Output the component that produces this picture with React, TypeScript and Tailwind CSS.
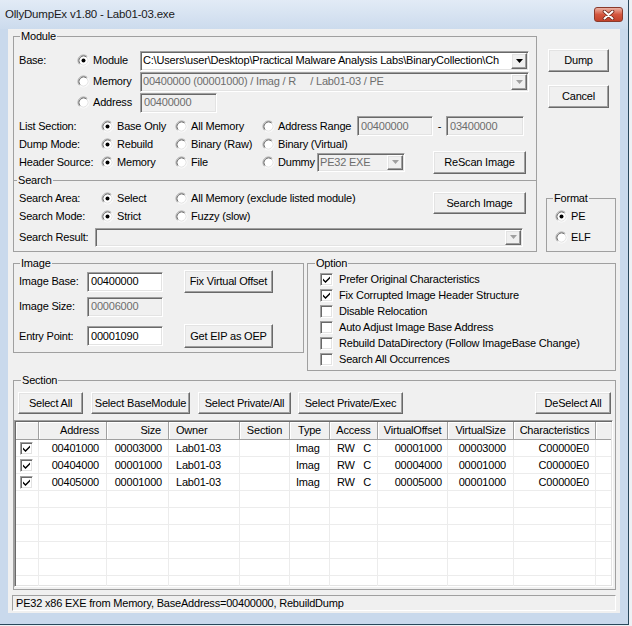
import type { ReactNode } from 'react';

const sunken =
  'border border-t-[#a0a0a0] border-l-[#a0a0a0] border-r-white border-b-white shadow-[inset_1px_1px_0_#696969,inset_-1px_-1px_0_#e3e3e3]';
const raised =
  'border border-t-white border-l-white border-r-[#696969] border-b-[#696969] shadow-[inset_-1px_-1px_0_#a0a0a0,inset_1px_1px_0_#e3e3e3] bg-[#f0f0f0]';

function Radio({ on }: { on?: boolean }) {
  return (
    <svg width="13" height="13" viewBox="0 0 13 13" className="shrink-0">
      <circle cx="6.5" cy="6.5" r="5" fill="#fff" />
      <path d="M2.61 10.39A5.5 5.5 0 0 1 10.39 2.61" fill="none" stroke="#a0a0a0" />
      <path d="M10.39 2.61A5.5 5.5 0 0 1 2.61 10.39" fill="none" stroke="#fff" />
      <path d="M3.32 9.68A4.5 4.5 0 0 1 9.68 3.32" fill="none" stroke="#696969" />
      <path d="M9.68 3.32A4.5 4.5 0 0 1 3.32 9.68" fill="none" stroke="#e3e3e3" />
      {on && <circle cx="6.5" cy="6.5" r="2" fill="#000" />}
    </svg>
  );
}

function RadioLabel({ on, className, children }: { on?: boolean; className: string; children: ReactNode }) {
  return (
    <div className={`flex items-center gap-[3px] shrink-0 ${className}`}>
      <Radio on={on} />
      <span className="whitespace-nowrap">{children}</span>
    </div>
  );
}

function Check({ on }: { on?: boolean }) {
  return (
    <span className={`w-[13px] h-[13px] shrink-0 bg-white flex items-center justify-center ${sunken}`}>
      {on && (
        <svg width="7" height="7" viewBox="0 0 7 7">
          <path d="M0 2.5L2.5 5L7 0.5V2.5L2.5 7L0 4.5Z" fill="#000" />
        </svg>
      )}
    </span>
  );
}

function Combo({ className, text = '', disabled }: { className: string; text?: string; disabled?: boolean }) {
  return (
    <div className={`flex shrink-0 ${sunken} ${disabled ? 'bg-[#f0f0f0] text-[#6d6d6d]' : 'bg-white'} ${className}`}>
      <div className="flex-1 min-w-0 overflow-hidden whitespace-pre pl-[2px] flex items-center">{text}</div>
      <div className={`w-[16px] m-[1px] flex items-center justify-center ${raised}`}>
        <svg width="7" height="4" viewBox="0 0 7 4">
          <path d="M0 0H7L3.5 4Z" fill={disabled ? '#a0a0a0' : '#000'} />
        </svg>
      </div>
    </div>
  );
}

function Edit({ className, text, disabled }: { className: string; text: string; disabled?: boolean }) {
  return (
    <div
      className={`shrink-0 flex items-center pl-[3px] ${sunken} ${disabled ? 'bg-[#f0f0f0] text-[#6d6d6d]' : 'bg-white'} ${className}`}
    >
      {text}
    </div>
  );
}

function Btn({ className, children }: { className: string; children: ReactNode }) {
  return (
    <div className={`shrink-0 flex items-center justify-center whitespace-nowrap ${raised} ${className}`}>{children}</div>
  );
}

const columns = [
  { w: 'w-[23px]', label: '', head: '', cell: '' },
  { w: 'w-[68px]', label: 'Address', head: 'justify-end pr-[7px]', cell: 'justify-end pr-[7px]' },
  { w: 'w-[62px]', label: 'Size', head: 'justify-end pr-[7px]', cell: 'justify-end pr-[6px]' },
  { w: 'w-[71px]', label: 'Owner', head: 'pl-[7px]', cell: 'pl-[7px]' },
  { w: 'w-[50px]', label: 'Section', head: 'justify-center', cell: '' },
  { w: 'w-[40px]', label: 'Type', head: 'justify-center', cell: 'pl-[6px]' },
  { w: 'w-[48px]', label: 'Access', head: 'justify-center', cell: 'pl-[7px]' },
  { w: 'w-[70px]', label: 'VirtualOffset', head: 'justify-center', cell: 'justify-end pr-[5px]' },
  { w: 'w-[66px]', label: 'VirtualSize', head: 'justify-center', cell: 'justify-end pr-[7px]' },
  { w: 'w-[82px]', label: 'Characteristics', head: 'justify-center', cell: 'justify-end pr-[6px]' },
];

const sections = [
  ['00401000', '00003000', 'Lab01-03', '', 'Imag', 'RW\u00a0\u00a0\u00a0C', '00001000', '00003000', 'C00000E0'],
  ['00404000', '00001000', 'Lab01-03', '', 'Imag', 'RW\u00a0\u00a0\u00a0C', '00004000', '00001000', 'C00000E0'],
  ['00405000', '00001000', 'Lab01-03', '', 'Imag', 'RW\u00a0\u00a0\u00a0C', '00005000', '00001000', 'C00000E0'],
];

const options = [
  { label: 'Prefer Original Characteristics', on: true },
  { label: 'Fix Corrupted Image Header Structure', on: true },
  { label: 'Disable Relocation', on: false },
  { label: 'Auto Adjust Image Base Address', on: false },
  { label: 'Rebuild DataDirectory (Follow ImageBase Change)', on: false },
  { label: 'Search All Occurrences', on: false },
];

function ListView() {
  const rows = Array.from({ length: 9 }, (_, i) => sections[i] || null);
  return (
    <div className={`w-[599px] h-[167px] bg-white overflow-hidden p-px ${sunken}`}>
      <div className="flex h-[18px] bg-[#f0f0f0] border-b border-[#a0a0a0]">
        {columns.map((c, i) => (
          <div
            key={i}
            className={`${c.w} shrink-0 flex items-center border-r border-[#a0a0a0] shadow-[inset_1px_1px_0_#fff] ${c.head}`}
          >
            {c.label}
          </div>
        ))}
        <div className="flex-1 shadow-[inset_1px_1px_0_#fff]" />
      </div>
      {rows.map((r, ri) => (
        <div key={ri} className="flex h-[17px] border-b border-[#ececec]">
          {columns.map((c, ci) => (
            <div key={ci} className={`${c.w} shrink-0 flex items-center border-r border-[#ececec] ${ci === 0 ? 'pl-[4px]' : c.cell}`}>
              {r && (ci === 0 ? <Check on /> : r[ci - 1])}
            </div>
          ))}
        </div>
      ))}
    </div>
  );
}

export default function App() {
  return (
    <div className="w-[632px] h-[626px] bg-[#eef1f5] overflow-hidden font-['Liberation_Sans',Arial,sans-serif] text-[11px] leading-[13px] tracking-[-0.2px] text-black">
      <div className="w-[629px] h-[625px] bg-[#c9d9ec] border-r border-b border-[#29485c] flex flex-col">
        <div className="h-[29px] shrink-0 flex items-center justify-between pl-[5px] pr-[5px] bg-gradient-to-b from-[#e2ebf6] to-[#ccdbed]">
          <span className="text-[11.5px] text-[#1a1a1a]">OllyDumpEx v1.80 - Lab01-03.exe</span>
          <div className="w-[29px] h-[15px] rounded-[3px] border border-[#8a3a2c] bg-gradient-to-b from-[#eab1a4] via-[#d4563f] to-[#c2412a] flex items-center justify-center">
            <svg width="13" height="10" viewBox="0 0 13 10">
              <path d="M2.5 1.5L10.5 8.5M10.5 1.5L2.5 8.5" stroke="#6b2519" strokeWidth="3.6" strokeLinecap="round" />
              <path d="M2.5 1.5L10.5 8.5M10.5 1.5L2.5 8.5" stroke="#fff" strokeWidth="2" strokeLinecap="round" />
            </svg>
          </div>
        </div>

        <div className="ml-[8px] w-[612px] h-[584px] shrink-0 bg-[#f0f0f0] pl-[5px] flex flex-col">
          <div className="flex items-start">
            <div className="w-[524px] shrink-0">
              <fieldset className="w-[524px] h-[151px] border border-b-0 border-[#a0a0a0]">
                <legend className="ml-[6px] px-[1px] leading-[14px]">Module</legend>
                <div className="pl-[5px] pt-[7px]">
                  <div className="flex items-center h-[21px]">
                    <div className="w-[58px] shrink-0">Base:</div>
                    <RadioLabel on className="w-[63px]">Module</RadioLabel>
                    <Combo
                      className="w-[389px] h-[20px]"
                      text={'C:\\Users\\user\\Desktop\\Practical Malware Analysis Labs\\BinaryCollection\\Ch'}
                    />
                  </div>
                  <div className="flex items-center h-[21px]">
                    <div className="w-[58px] shrink-0" />
                    <RadioLabel className="w-[63px]">Memory</RadioLabel>
                    <Combo disabled className="w-[389px] h-[20px]" text="00400000 (00001000) / Imag / R     / Lab01-03 / PE" />
                  </div>
                  <div className="flex items-center h-[21px]">
                    <div className="w-[58px] shrink-0" />
                    <RadioLabel className="w-[63px]">Address</RadioLabel>
                    <Edit disabled className="w-[77px] h-[20px]" text="00400000" />
                  </div>
                  <div className="flex items-center h-[20px] mt-[3px]">
                    <div className="w-[82px] shrink-0">List Section:</div>
                    <RadioLabel on className="w-[74px]">Base Only</RadioLabel>
                    <RadioLabel className="w-[87px]">All Memory</RadioLabel>
                    <RadioLabel className="w-[95px]">Address Range</RadioLabel>
                    <Edit disabled className="w-[76px] h-[20px]" text="00400000" />
                    <div className="w-[13px] shrink-0 text-center">-</div>
                    <Edit disabled className="w-[78px] h-[20px]" text="03400000" />
                  </div>
                  <div className="flex items-center h-[17px]">
                    <div className="w-[82px] shrink-0">Dump Mode:</div>
                    <RadioLabel on className="w-[74px]">Rebuild</RadioLabel>
                    <RadioLabel className="w-[87px]">Binary (Raw)</RadioLabel>
                    <RadioLabel className="w-[95px]">Binary (Virtual)</RadioLabel>
                  </div>
                  <div className="flex items-center h-[18px]">
                    <div className="w-[82px] shrink-0">Header Source:</div>
                    <RadioLabel on className="w-[74px]">Memory</RadioLabel>
                    <RadioLabel className="w-[87px]">File</RadioLabel>
                    <RadioLabel className="w-[55px]">Dummy</RadioLabel>
                    <Combo disabled className="w-[88px] h-[19px]" text="PE32 EXE" />
                    <Btn className="w-[93px] h-[23px] ml-[28px]">ReScan Image</Btn>
                  </div>
                </div>
              </fieldset>

              <fieldset className="w-[524px] h-[79px] -mt-[7px] border border-[#a0a0a0]">
                <legend className="ml-[3px] px-[1px] leading-[14px]">Search</legend>
                <div className="pl-[5px]">
                  <div className="flex items-start">
                    <div className="w-[414px] shrink-0 pt-[2px]">
                      <div className="flex items-center h-[18px]">
                        <div className="w-[82px] shrink-0">Search Area:</div>
                        <RadioLabel on className="w-[74px]">Select</RadioLabel>
                        <RadioLabel className="w-[200px]">All Memory (exclude listed module)</RadioLabel>
                      </div>
                      <div className="flex items-center h-[19px]">
                        <div className="w-[82px] shrink-0">Search Mode:</div>
                        <RadioLabel on className="w-[74px]">Strict</RadioLabel>
                        <RadioLabel className="w-[100px]">Fuzzy (slow)</RadioLabel>
                      </div>
                    </div>
                    <Btn className="w-[93px] h-[22px] mt-[5px]">Search Image</Btn>
                  </div>
                  <div className="flex items-center h-[20px] mt-[1px]">
                    <div className="w-[76px] shrink-0">Search Result:</div>
                    <Combo disabled className="w-[428px] h-[19px]" />
                  </div>
                </div>
              </fieldset>
            </div>

            <div className="w-[70px] ml-[9px] shrink-0">
              <Btn className="w-[61px] h-[23px] ml-[2px] mt-[20px]">Dump</Btn>
              <Btn className="w-[61px] h-[23px] ml-[2px] mt-[13px]">Cancel</Btn>
              <fieldset className="w-[70px] h-[61px] mt-[83px] border border-[#a0a0a0]">
                <legend className="ml-[6px] px-[1px] leading-[14px]">Format</legend>
                <div className="pl-[8px] pt-[2px]">
                  <RadioLabel on className="h-[18px]">PE</RadioLabel>
                  <RadioLabel className="h-[18px] mt-[3px]">ELF</RadioLabel>
                </div>
              </fieldset>
            </div>
          </div>

          <div className="flex items-start mt-[4px]">
            <fieldset className="w-[291px] h-[97px] shrink-0 border border-[#a0a0a0]">
              <legend className="ml-[6px] px-[1px] leading-[14px]">Image</legend>
              <div className="pl-[5px]">
                <div className="flex items-center h-[23px]">
                  <div className="w-[68px] shrink-0">Image Base:</div>
                  <Edit className="w-[76px] h-[20px]" text="00400000" />
                  <Btn className="w-[89px] h-[23px] ml-[21px]">Fix Virtual Offset</Btn>
                </div>
                <div className="flex items-center h-[21px] mt-[3px]">
                  <div className="w-[68px] shrink-0">Image Size:</div>
                  <Edit disabled className="w-[76px] h-[20px]" text="00006000" />
                </div>
                <div className="flex items-center h-[24px] mt-[7px]">
                  <div className="w-[68px] shrink-0">Entry Point:</div>
                  <Edit className="w-[76px] h-[20px]" text="00001090" />
                  <Btn className="w-[89px] h-[24px] ml-[21px]">Get EIP as OEP</Btn>
                </div>
              </div>
            </fieldset>
            <fieldset className="w-[309px] h-[115px] ml-[3px] shrink-0 border border-[#a0a0a0]">
              <legend className="ml-[7px] px-[1px] leading-[14px]">Option</legend>
              <div className="pl-[12px] pt-[1px]">
                {options.map((o) => (
                  <div key={o.label} className="flex items-center gap-[6px] h-[16px]">
                    <Check on={o.on} />
                    <span className="whitespace-nowrap">{o.label}</span>
                  </div>
                ))}
              </div>
            </fieldset>
          </div>

          <fieldset className="w-[603px] h-[217px] mt-[2px] shrink-0 border border-[#a0a0a0]">
            <legend className="ml-[7px] px-[1px] leading-[14px]">Section</legend>
            <div className="flex items-center h-[22px] mt-[5px] px-[4px]">
              <Btn className="w-[65px] h-[22px]">Select All</Btn>
              <Btn className="w-[99px] h-[22px] ml-[8px]">Select BaseModule</Btn>
              <Btn className="w-[93px] h-[22px] ml-[8px]">Select Private/All</Btn>
              <Btn className="w-[105px] h-[22px] ml-[7px]">Select Private/Exec</Btn>
              <Btn className="w-[76px] h-[22px] ml-auto">DeSelect All</Btn>
            </div>
            <div className="mt-[6px]">
              <ListView />
            </div>
          </fieldset>

          <div className="w-[604px] h-[16px] -ml-px mt-[5px] shrink-0 flex items-center pl-[3px] border border-t-[#a0a0a0] border-l-[#a0a0a0] border-r-white border-b-white whitespace-nowrap">
            PE32 x86 EXE from Memory, BaseAddress=00400000, RebuildDump
          </div>
        </div>
      </div>
    </div>
  );
}
